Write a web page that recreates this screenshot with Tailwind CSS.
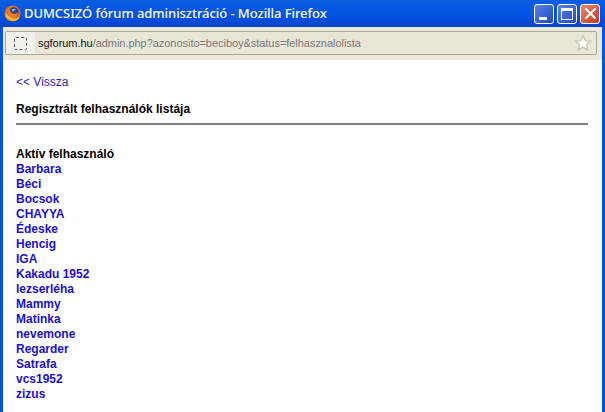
<!DOCTYPE html>
<html lang="hu">
<head>
    <meta charset="UTF-8">
    <title>DUMCSIZÓ fórum adminisztráció - Mozilla Firefox</title>
    <script src="https://cdn.jsdelivr.net/npm/@tailwindcss/browser@4"></script>
</head>
<body class="w-[605px] h-[412px] overflow-hidden bg-white font-['Liberation_Sans',sans-serif] flex flex-col">

    <!-- Title bar -->
    <div class="h-[27px] shrink-0 flex items-center pl-[4px] pr-[5px] bg-gradient-to-b from-[#0a5ce0] via-[#0355e4] to-[#0344cf]">
        <svg width="17" height="17" viewBox="0 0 18 18" class="shrink-0">
            <circle cx="9" cy="9" r="8.5" fill="#e2701c"/>
            <path d="M1.5 8C1 13 5 17 10 17c3 0 6-2 7-5-2 2-5 3-8 2-3-1-5-3-7.500-6z" fill="#f4b63a"/>
            <circle cx="10.500" cy="7.500" r="5" fill="#2c3f8f"/>
            <path d="M8 5c1-1 3-1.500 4.500-.5-.5 1-1 1-2 1.500-.5 1.500-2 1-2.500-1z" fill="#8fb0e0"/>
            <path d="M5 3c1 3 2 5 4 6 2 .7 4 .5 6-1-.5 4-3.500 6-6.500 5.500C5 13 3 8 5 3z" fill="#ea7d1f"/>
        </svg>
        <div class="ml-[3px] text-white text-[13px] tracking-[-0.06px] font-medium font-['Noto_Sans',sans-serif] leading-none whitespace-nowrap">DUMCSIZÓ fórum adminisztráció - Mozilla Firefox</div>
        <div class="ml-auto flex gap-[3px]">
            <div class="w-[20px] h-[20px] rounded-[3px] border border-white bg-gradient-to-br from-[#5a83e6] to-[#1f49c4] relative">
                <div class="absolute left-[4px] bottom-[3px] w-[8px] h-[3px] bg-white"></div>
            </div>
            <div class="w-[20px] h-[20px] rounded-[3px] border border-white bg-gradient-to-br from-[#5a83e6] to-[#1f49c4] p-[3px]">
                <div class="w-full h-full border border-white border-t-[3px]"></div>
            </div>
            <div class="w-[20px] h-[20px] rounded-[3px] border border-white bg-gradient-to-br from-[#e9866a] to-[#c5361a] flex items-center justify-center">
                <svg width="13" height="13" viewBox="0 0 13 13"><path d="M1.5 1.5l10 10M11.5 1.5l-10 10" stroke="#fff" stroke-width="2.2"/></svg>
            </div>
        </div>
    </div>

    <div class="flex-1 flex flex-col border-x-[3px] border-[#0553e3] min-h-0">
        <!-- Address bar -->
        <div class="h-[33px] shrink-0 bg-[#ece9d8] pt-[4px] pl-[2px] pr-[5px]">
            <div class="h-[24px] flex items-center border border-[#aca899] rounded-[2px] bg-[#e9e6d8]">
                <div class="w-[29px] h-full bg-[#f1f0ea] flex items-center justify-center shrink-0">
                    <div class="w-[13px] h-[13px] border border-dashed border-[#555] rounded-[2px]"></div>
                </div>
                <div class="ml-[3px] text-[11px] tracking-[-0.04px] leading-none whitespace-nowrap text-[#111]">sgforum.hu<span class="text-[#777]">/admin.php?azonosito=beciboy&amp;status=felhasznalolista</span></div>
                <svg width="18" height="18" viewBox="0 0 18 18" class="ml-auto mr-[4px]">
                    <path d="M9 1.5l2.3 5 5.2.6-3.9 3.5 1.1 5.4L9 13.3 4.3 16l1.1-5.400L1.500 7.100l5.200-.6z" fill="#fbfaf5" stroke="#c4c2b4" stroke-width="1.2"/>
                </svg>
            </div>
        </div>

        <!-- Page content -->
        <div class="flex-1 bg-white pl-[13px] pr-[14px] pt-[15px] text-[12px] leading-[15px] text-black">
            <a href="#" class="block text-[#2b1fc0]">&lt;&lt; Vissza</a>
            <div class="mt-[12px] font-bold">Regisztrált felhasználók listája</div>
            <hr class="mt-[6px] h-[2px] border-0 bg-[#808080]">
            <div class="mt-[22px] font-bold">Aktív felhasználó</div>
            <ul class="font-bold text-[#1a0fd0]">
                <li>Barbara</li>
                <li>Béci</li>
                <li>Bocsok</li>
                <li>CHAYYA</li>
                <li>Édeske</li>
                <li>Hencig</li>
                <li>IGA</li>
                <li>Kakadu 1952</li>
                <li>lezserléha</li>
                <li>Mammy</li>
                <li>Matinka</li>
                <li>nevemone</li>
                <li>Regarder</li>
                <li>Satrafa</li>
                <li>vcs1952</li>
                <li>zizus</li>
            </ul>
        </div>
    </div>
</body>
</html>
